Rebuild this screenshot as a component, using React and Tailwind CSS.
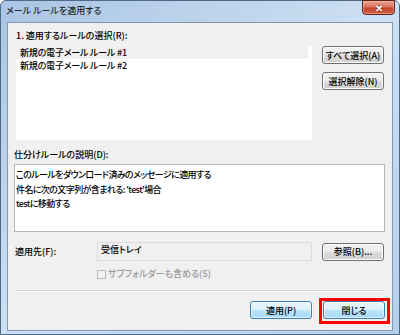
import React from 'react';

const jp = "font-['Meiryo_UI','Noto_Sans_CJK_JP',sans-serif] [font-feature-settings:'palt']";

const Btn = ({ children, blue, className = '' }) => (
  <button
    className={`h-[18px] w-[62px] rounded-[3px] border text-[9px] leading-none text-black ${
      blue
        ? 'border-[#3c7fb1] bg-[linear-gradient(#eaf6fd_0%,#d9f0fc_50%,#bee6fd_50%,#a7d9f5_100%)] shadow-[inset_0_0_0_1px_#ffffffa0]'
        : 'border-[#707070] bg-[linear-gradient(#f2f2f2_0%,#ebebeb_50%,#dddddd_50%,#cfcfcf_100%)] shadow-[inset_0_0_0_1px_#fcfcfc]'
    } ${className}`}
  >
    {children}
  </button>
);

export default function App() {
  return (
    <div className={`w-[400px] h-[335px] bg-white ${jp}`}>
      <div className="h-full rounded-t-[6px] border border-[#4e6a87] bg-linear-to-br from-[#a9c5e4] via-[#cddff2] to-[#b6cfea] flex flex-col">
        {/* Title bar */}
        <div className="h-[21px] flex items-start justify-between pl-[5px] pr-[4px]">
          <span className="mt-[4px] text-[9px] leading-[12px] text-black">メール ルールを適用する</span>
          <div className="w-[33px] h-[15px] -mt-px rounded-b-[4px] border border-[#5e2318] bg-[linear-gradient(#eaa493_0%,#d8735f_45%,#c4452c_55%,#d35a3c_100%)] flex items-center justify-center shadow-[inset_0_0_0_1px_#f0b7a8a0]">
            <span className="text-[10px] font-bold leading-none text-white [text-shadow:0_0_2px_#4a1a10]">✕</span>
          </div>
        </div>

        {/* Client area */}
        <div className="mx-[6px] mb-[3px] flex-1 border border-[#7f97b2] bg-[#f0f0f0] flex flex-col px-[6px] pt-[7px] text-[9px] font-medium text-black">
          <div className="pl-[2px] h-[12px] leading-[12px]">1. 適用するルールの選択(R):</div>

          <div className="mt-[4px] flex items-start">
            <div className="ml-[2px] w-[296px] h-[94px] bg-white flex flex-col tracking-[-0.2px]">
              <div className="h-[13px] leading-[13px] pl-[4px] bg-[#f0f0f0] mr-[4px]">新規の電子メール&nbsp;ルール #1</div>
              <div className="h-[14px] leading-[14px] pl-[4px]">新規の電子メール&nbsp;ルール #2</div>
            </div>
            <div className="ml-[10px] flex flex-col gap-[8px]">
              <Btn>すべて選択(A)</Btn>
              <Btn>選択解除(N)</Btn>
            </div>
          </div>

          <div className="mt-[9px] h-[12px] leading-[12px]">仕分けルールの説明(D):</div>
          <div className="mt-[3px] w-[371px] h-[68px] border border-[#b8b8bc] bg-white px-[1px] pt-[3px] leading-[14.5px] tracking-[-0.6px]">
            <div>このルールをダウンロード済みのメッセージに適用する</div>
            <div>件名に次の文字列が含まれる:&nbsp;'test'場合</div>
            <div>testに移動する</div>
          </div>

          <div className="mt-[10px] flex items-center h-[19px]">
            <div className="w-[83px] pl-[1px]">適用先(F):</div>
            <div className="w-[215px] h-[19px] border border-[#dcdcdc] bg-[#f0f0f0] pl-[3px] pt-[1px] leading-[12px]">受信トレイ</div>
            <Btn className="ml-[10px]">参照(B)...</Btn>
          </div>

          <div className="mt-[7px] ml-[83px] flex items-center h-[12px] text-[#9a9a9a]">
            <span className="w-[9px] h-[9px] border border-[#b8b8b8] bg-[#f4f4f4] mr-[2px]"></span>
            <span>サブフォルダーも含める(S)</span>
          </div>

          <div className="mt-[10px] w-[371px] h-px bg-[#d5d5d5] border-b border-white box-content"></div>

          <div className="mt-[9px] flex justify-end gap-[11px] pr-[1px]">
            <Btn blue>適用(P)</Btn>
            <div className="relative">
              <Btn blue>閉じる</Btn>
              <span className="absolute -left-[4px] -top-[3px] -right-[5px] -bottom-[5px] border-[3px] border-[#ff0000]"></span>
            </div>
          </div>
        </div>
      </div>
    </div>
  );
}
